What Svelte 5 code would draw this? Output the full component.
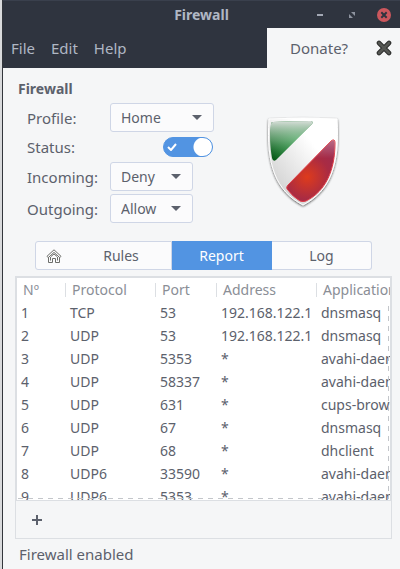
<script>
  const menus = ['File', 'Edit', 'Help'];
  const policies = ['Allow', 'Deny', 'Reject'];
  const columns = ['Nº', 'Protocol', 'Port', 'Address', 'Application'];
  const rows = [
    ['TCP', '53', '192.168.122.1', 'dnsmasq'],
    ['UDP', '53', '192.168.122.1', 'dnsmasq'],
    ['UDP', '5353', '*', 'avahi-daemon'],
    ['UDP', '58337', '*', 'avahi-daemon'],
    ['UDP', '631', '*', 'cups-browsed'],
    ['UDP', '67', '*', 'dnsmasq'],
    ['UDP', '68', '*', 'dhclient'],
    ['UDP6', '33590', '*', 'avahi-daemon'],
    ['UDP6', '5353', '*', 'avahi-daemon']
  ];
  let profile = $state('Home');
  let enabled = $state(true);
  let incoming = $state('Deny');
  let outgoing = $state('Allow');
  let tab = $state('Report');
</script>

<div class="window">
  <header>
    <div class="titlebar">
      <h1>Firewall</h1>
      <div class="controls">
        <button aria-label="Minimize"><svg width="14" height="14"><path d="M4 6h6v2H4z" fill="#a3a8b4" /></svg></button>
        <button aria-label="Maximize"><svg width="14" height="14"><path d="M6 4h4v4zM4 6v4h4z" fill="#8e939f" /></svg></button>
        <button aria-label="Close"><svg width="14" height="14"><circle cx="7" cy="7" r="7" fill="#cc575d" /><path d="M4.3 4.3l5.4 5.4M9.7 4.3L4.3 9.7" stroke="#2f343f" stroke-width="2" /></svg></button>
      </div>
    </div>
    <div class="menubar">
      <nav>{#each menus as menu}<button>{menu}</button>{/each}</nav>
      <div class="donate">
        <a href="#donate">Donate?</a>
        <button aria-label="Dismiss">
          <svg width="16" height="16"><path d="M3 3l10 10M13 3L3 13" stroke="#2d2e2d" stroke-width="4.6" stroke-linecap="round" /><path d="M3 3l10 10M13 3L3 13" stroke="#555753" stroke-width="2.6" stroke-linecap="round" /></svg>
        </button>
      </div>
    </div>
  </header>

  {#snippet arrow()}
    <svg class="arrow" width="10" height="5"><path d="M0 0h10L5 5z" fill="#5c616c" /></svg>
  {/snippet}

  <main>
    <section class="top">
      <div class="settings">
        <h2>Firewall</h2>
        <div class="field">
          <label for="profile">Profile:</label>
          <span class="combo wide">
            <select id="profile" bind:value={profile}><option>Home</option><option>Office</option><option>Public</option></select>
            {@render arrow()}
          </span>
        </div>
        <div class="field status">
          <label for="status">Status:</label>
          <span class="combo wide toggle">
            <input id="status" type="checkbox" role="switch" bind:checked={enabled} />
            {#if enabled}<svg class="check" width="10" height="8"><path d="M1 4l3 3 5-6" fill="none" stroke="#fff" stroke-width="2" /></svg>{/if}
          </span>
        </div>
        <div class="field">
          <label for="incoming">Incoming:</label>
          <span class="combo">
            <select id="incoming" bind:value={incoming}>{#each policies as p}<option>{p}</option>{/each}</select>
            {@render arrow()}
          </span>
        </div>
        <div class="field last">
          <label for="outgoing">Outgoing:</label>
          <span class="combo">
            <select id="outgoing" bind:value={outgoing}>{#each policies as p}<option>{p}</option>{/each}</select>
            {@render arrow()}
          </span>
        </div>
      </div>
      <div class="shield">
        <svg width="78" height="96" viewBox="0 0 78 96" aria-hidden="true">
          <defs>
            <linearGradient id="body" x1="0.1" y1="0.8" x2="0.8" y2="0.1"><stop offset="0" stop-color="#d2d2d2" /><stop offset=".55" stop-color="#f3f3f3" /><stop offset=".75" stop-color="#fff" /></linearGradient>
            <linearGradient id="shine" x1="0" y1="0" x2="0" y2="1"><stop offset="0" stop-color="#d7ded9" /><stop offset=".5" stop-color="#7eaf88" stop-opacity=".6" /><stop offset="1" stop-color="#166d28" stop-opacity="0" /></linearGradient>
            <radialGradient id="green" gradientUnits="userSpaceOnUse" cx="34" cy="24" r="32"><stop offset="0" stop-color="#54bf6e" /><stop offset="1" stop-color="#075817" /></radialGradient>
            <radialGradient id="red" gradientUnits="userSpaceOnUse" cx="43" cy="63" r="37"><stop offset="0" stop-color="#de3b1c" /><stop offset=".6" stop-color="#a92b43" /><stop offset="1" stop-color="#9d2b50" /></radialGradient>
            <linearGradient id="gloss" x1="0" y1="0" x2="0" y2="1"><stop offset="0" stop-color="#fff" stop-opacity=".3" /><stop offset=".3" stop-color="#fff" stop-opacity="0" /></linearGradient>
            <filter id="shadow" x="-20%" y="-20%" width="140%" height="140%"><feDropShadow dx="0" dy="1" stdDeviation="1.2" flood-color="#222" flood-opacity=".75" /></filter>
          </defs>
          <path d="M5 5Q39 3 73 5C76 51 66 77 39 91C12 77 2 51 5 5Z" fill="url(#body)" stroke="#fff" stroke-width="1" filter="url(#shadow)" />
          <path d="M9 8Q29 7 47 7Q50 8 48 10L12 46Q9 48 8 44Q5 27 7 10Q7 8 9 8Z" fill="url(#green)" />
          <path d="M9 8Q29 7 47 7Q50 8 48 10L12 46Q9 48 8 44Q5 27 7 10Q7 8 9 8Z" fill="url(#shine)" />
          <path d="M67 27Q71 24 71 29C71 56 62 77 42 87Q39 88 36 87Q29 83 23 75Q22 73 24 71Z" fill="url(#red)" stroke="#df3c47" stroke-width="1" />
          <path d="M67 27Q71 24 71 29C71 56 62 77 42 87Q39 88 36 87Q29 83 23 75Q22 73 24 71Z" fill="url(#gloss)" />
        </svg>
      </div>
    </section>

    <div class="tabs">
      <button class:active={tab === 'Rules'} onclick={() => (tab = 'Rules')} class="rules">
        <svg width="16" height="16" fill="none" stroke="#6d6e6a" stroke-width="1"><path d="M1 8.3L8 1.8l7 6.5-1.2 1.4L8 4.4 2.2 9.7zM2.5 9.5v5h4v-4h3v4h4v-5M4.5 9v3.5M11.5 9v3.5M5 8.5l3-2.5 3 2.5" /></svg>
        <span>Rules</span>
      </button>
      <button class:active={tab === 'Report'} onclick={() => (tab = 'Report')}>Report</button>
      <button class:active={tab === 'Log'} onclick={() => (tab = 'Log')}>Log</button>
    </div>

    <div class="listing">
      <div class="scroller">
        <table>
          <colgroup><col class="c1" /><col class="c2" /><col class="c3" /><col class="c4" /><col class="c5" /></colgroup>
          <thead><tr>{#each columns as column}<th scope="col"><span>{column}</span></th>{/each}</tr></thead>
          <tbody>
            {#each rows as row, i}
              <tr><td>{i + 1}</td>{#each row as cell}<td>{cell}</td>{/each}</tr>
            {/each}
          </tbody>
        </table>
      </div>
      <div class="more right"></div>
      <div class="more bottom"></div>
    </div>
    <div class="toolbar">
      <button aria-label="Add rule"><svg width="10" height="10"><path d="M4 0h2v4h4v2H6v4H4V6H0V4h4z" fill="#5c616c" /></svg></button>
    </div>
  </main>
  <footer>Firewall enabled</footer>
</div>

<style>
  :global(body) { margin: 0; background: #d9dadc; }
  .window, .window * { box-sizing: border-box; }
  .window {
    height: 100vh; margin-left: 2px; border-left: 1px solid #33363c;
    display: flex; flex-direction: column;
    background: #f5f6f7; color: #5c616c;
    font: 14px/20px "Noto Sans", "Open Sans", sans-serif;
  }
  button, select { font: inherit; color: inherit; }
  button { border: 0; padding: 0; background: none; }
  svg { display: block; }
  h1, h2 { margin: 0; font-size: 14px; line-height: 20px; font-weight: 700; }
  header { background: #2f343f; color: #b0b7c4; }
  .titlebar { height: 28px; display: grid; grid-template-columns: 1fr auto 1fr; align-items: center; border-top: 1px solid #3a404d; }
  h1 { grid-column: 2; }
  .controls { display: flex; justify-content: flex-end; gap: 18px; padding-right: 9px; }
  .menubar { height: 40px; display: flex; justify-content: space-between; font-size: 15px; }
  nav { display: flex; align-items: center; gap: 16px; padding-left: 8px; }
  .donate { width: 133px; display: flex; align-items: center; justify-content: space-between; padding: 0 8px 0 23px; background: #f5f6f7; color: #5c616c; }
  a { color: inherit; text-decoration: none; }

  main { flex: 1; min-height: 0; display: flex; flex-direction: column; padding: 0 8px 0 12px; }
  .top { display: flex; padding: 11px 0 0 3px; }
  .settings { width: 195px; }
  .field { display: flex; align-items: center; height: 29px; margin-bottom: 3px; padding-left: 9px; }
  h2 + .field { margin-top: 4px; margin-bottom: 0; }
  .status { height: 30px; margin-bottom: 0; }
  .last { margin-bottom: 0; }
  label { flex: none; width: 83px; font-size: 15px; }
  .combo { flex: none; position: relative; width: 83px; }
  .wide { width: 104px; }
  .combo select { display: block; width: 100%; height: 29px; padding: 0 10px; border: 1px solid #cfd6e6; border-radius: 3px; background: #fbfbfc; appearance: none; }
  .arrow { position: absolute; right: 12px; top: 12px; pointer-events: none; }
  .toggle { display: flex; justify-content: flex-end; padding-right: 1px; }
  .toggle input { appearance: none; width: 50px; height: 20px; margin: 0; border: 1px solid #5294e2; border-radius: 10px; background: radial-gradient(circle at 39px 9px, #fff 9px, transparent 10px), #5294e2; }
  .toggle input:not(:checked) { background: radial-gradient(circle at 9px 9px, #fff 9px, transparent 10px), #cfd6e6; border-color: #cfd6e6; }
  .check { position: absolute; right: 37px; top: 6px; pointer-events: none; }
  .shield { flex: 1; display: flex; justify-content: center; padding-top: 35px; }

  .tabs { display: grid; grid-template-columns: 137fr 100fr 100fr; margin: 18px 20px 6px; }
  .tabs button { height: 29px; border: 1px solid #cfd6e6; border-left-width: 0; background: #fbfbfc; }
  .tabs .rules { display: flex; align-items: center; padding-left: 10px; border-left-width: 1px; border-radius: 3px 0 0 3px; }
  .rules span { flex: 1; padding-left: 9px; }
  .tabs button:last-child { border-radius: 0 3px 3px 0; }
  .tabs button.active { background: #5294e2; border-color: #5294e2; color: #fff; }

  .listing { flex: 1; min-height: 0; position: relative; border: 2px solid #dcdfe3; border-bottom-width: 1px; background: #fff; }
  .scroller { height: 100%; overflow: auto; scrollbar-width: none; }
  table { width: 440px; table-layout: fixed; border-collapse: collapse; }
  .c1 { width: 49px; } .c2 { width: 90px; } .c3 { width: 61px; } .c4 { width: 100px; }
  th, td { padding: 0 0 0 4px; height: 23px; text-align: left; white-space: nowrap; }
  th { padding: 0; font-weight: 400; color: #8a8e96; }
  th span { display: block; line-height: 14px; padding-left: 6px; border-right: 1px solid #dcdfe3; }
  .more { position: absolute; pointer-events: none; }
  .right { top: 28px; bottom: 2px; right: 1px; width: 1px; background: repeating-linear-gradient(#c3c6ca 0 5px, transparent 5px 10px); }
  .bottom { left: 1px; right: 1px; bottom: 1px; height: 1px; background: repeating-linear-gradient(90deg, #c3c6ca 0 5px, transparent 5px 10px); }
  .toolbar { height: 38px; display: flex; align-items: center; padding-left: 16px; border: 1px solid #dcdfe3; border-top: 0; }
  footer { height: 30px; padding: 5px 16px; font-size: 15px; }
</style>
